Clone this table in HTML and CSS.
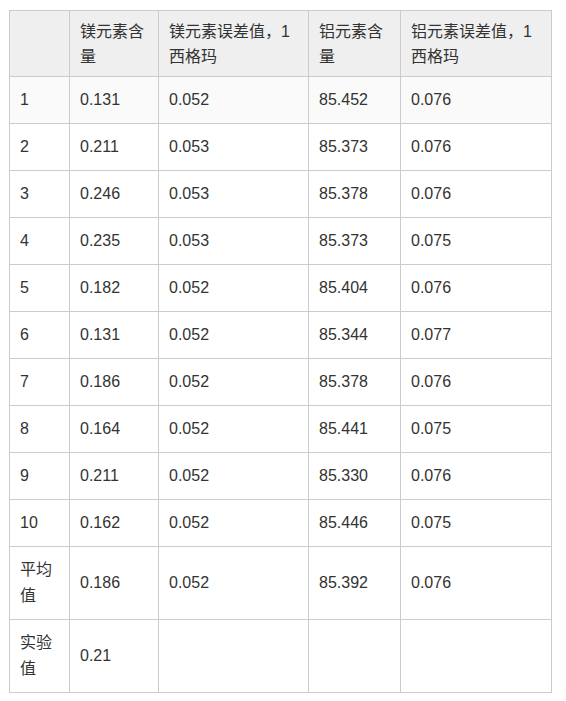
FILE: index.html
```html
<!DOCTYPE html>
<html lang="zh">
<head>
<meta charset="utf-8">
<link rel="stylesheet" href="styles.css">
</head>
<body>
<div class="wrap">
<table class="data">
  <colgroup>
    <col class="c1"><col class="c2"><col class="c3"><col class="c4"><col class="c5">
  </colgroup>
  <thead>
    <tr><th></th><th>镁元素含量</th><th>镁元素误差值，1西格玛</th><th>铝元素含量</th><th>铝元素误差值，1西格玛</th></tr>
  </thead>
  <tbody>
    <tr class="first"><td>1</td><td>0.131</td><td>0.052</td><td>85.452</td><td>0.076</td></tr>
    <tr><td>2</td><td>0.211</td><td>0.053</td><td>85.373</td><td>0.076</td></tr>
    <tr><td>3</td><td>0.246</td><td>0.053</td><td>85.378</td><td>0.076</td></tr>
    <tr><td>4</td><td>0.235</td><td>0.053</td><td>85.373</td><td>0.075</td></tr>
    <tr><td>5</td><td>0.182</td><td>0.052</td><td>85.404</td><td>0.076</td></tr>
    <tr><td>6</td><td>0.131</td><td>0.052</td><td>85.344</td><td>0.077</td></tr>
    <tr><td>7</td><td>0.186</td><td>0.052</td><td>85.378</td><td>0.076</td></tr>
    <tr><td>8</td><td>0.164</td><td>0.052</td><td>85.441</td><td>0.075</td></tr>
    <tr><td>9</td><td>0.211</td><td>0.052</td><td>85.330</td><td>0.076</td></tr>
    <tr><td>10</td><td>0.162</td><td>0.052</td><td>85.446</td><td>0.075</td></tr>
    <tr><td>平均值</td><td>0.186</td><td>0.052</td><td>85.392</td><td>0.076</td></tr>
    <tr><td>实验值</td><td>0.21</td><td></td><td></td><td></td></tr>
  </tbody>
</table>
</div>
</body>
</html>
```

FILE: styles.css
```css
html, body {
  margin: 0;
  background: #ffffff;
}
.wrap {
  padding: 10px 0 0 9px;
}
.data {
  border-collapse: collapse;
  table-layout: fixed;
  width: 542px;
  font-family: "Liberation Sans", Arial, "Noto Sans CJK SC", sans-serif;
  font-size: 16px;
  color: #333333;
}
.c1 { width: 60px; }
.c2 { width: 89px; }
.c3 { width: 150px; }
.c4 { width: 92px; }
.c5 { width: 151px; }
.data th,
.data td {
  border: 1px solid #cccccc;
  text-align: left;
  vertical-align: middle;
  word-break: break-all;
}
.data th {
  background: #efefef;
  font-weight: normal;
  padding: 8px 10px 7px;
  line-height: 25px;
}
.data td {
  padding: 10px 10px;
  line-height: 26px;
}
.data tr.first td {
  background: #fafafa;
}
```
